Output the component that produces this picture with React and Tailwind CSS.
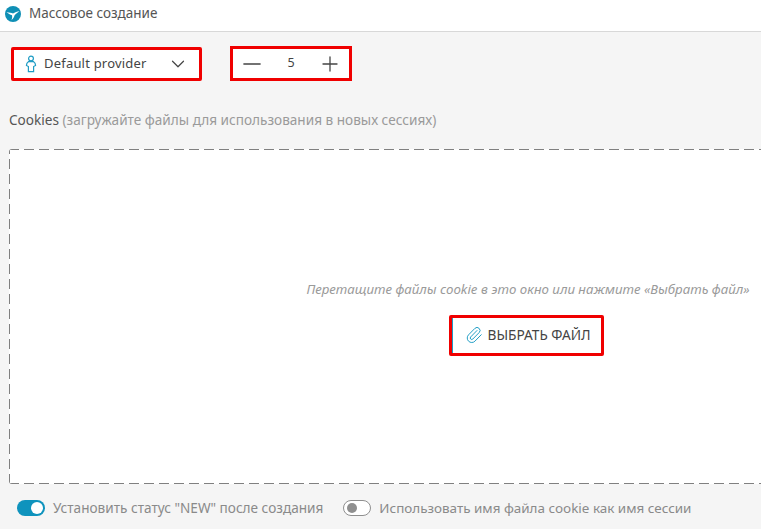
import React from 'react';
import { ChevronDown, Minus, Plus, Paperclip } from 'lucide-react';

const font = { fontFamily: '"Noto Sans", sans-serif' };

function Logo() {
  return (
    <svg width="16" height="16" viewBox="0 0 16 16">
      <circle cx="8" cy="8" r="8" fill="#0f8fb5" />
      <path d="M1.5 6C4.5 6.8 6.5 6.6 8 7.6C10 6.4 12 5.4 14.5 5.2C12.5 6.5 10.8 8 9.6 9.2C9.2 11 8.2 12.8 6.5 14C7.2 12.2 7.3 10.6 7 9.2C5.2 8.6 3 7.6 1.5 6Z" fill="#fff" />
    </svg>
  );
}

function PersonIcon() {
  return (
    <svg width="12" height="18" viewBox="0 0 12 18" fill="none" stroke="#1e9cc4" strokeWidth="1.2">
      <circle cx="6" cy="3.5" r="2.4" />
      <path d="M3.6 6.6H8.4C9.8 7.5 10.6 9 10.6 10.5L8.6 11.5V16.6H3.4V11.5L1.4 10.5C1.4 9 2.2 7.5 3.6 6.6Z" />
    </svg>
  );
}

function Toggle({ on }) {
  return on ? (
    <span className="flex items-center justify-end w-[28px] h-[16px] rounded-full bg-[#0f93bd] pr-[2px]">
      <span className="w-[12px] h-[12px] rounded-full bg-white" />
    </span>
  ) : (
    <span className="flex items-center w-[28px] h-[16px] rounded-full border border-[#8f8f8f] bg-white pl-[3px]">
      <span className="w-[10px] h-[10px] rounded-full bg-[#8f8f8f]" />
    </span>
  );
}

export default function App() {
  return (
    <div className="h-[529px] w-[761px] overflow-hidden bg-[#f5f5f5] text-[13px] flex flex-col" style={font}>
      {/* Header */}
      <div className="h-[32px] shrink-0 bg-white border-b border-[#d8d8d8] flex items-center pl-[5px] gap-[8px] pb-[4px]">
        <Logo />
        <span className="text-[#555] text-[13.5px]">Массовое создание</span>
      </div>

      <div className="flex items-end gap-[28px] pl-[11px] mt-[14px]">
        <div className="w-[191px] h-[34px] border-[3px] border-[#f00000] rounded-[2px] bg-white flex items-center pl-[11px] pr-[10px]">
          <PersonIcon />
          <span className="ml-[7px] text-[#444] text-[13px] tracking-[0.2px]">Default provider</span>
          <ChevronDown className="ml-auto text-[#444]" size={22} strokeWidth={1.3} />
        </div>
        <div className="w-[122px] h-[35px] border-[3px] border-[#f00000] bg-white flex items-center justify-between pl-[5px] pr-[7px]">
          <Minus className="text-[#444]" size={28} strokeWidth={1.1} />
          <span className="mr-[2px] text-[#444] text-[12.5px]">5</span>
          <Plus className="text-[#444]" size={24} strokeWidth={1.3} />
        </div>
      </div>

      <div className="ml-[9px] mt-[30px] text-[13.6px] leading-[18px] text-[#555]">
        Cookies <span className="text-[#9a9a9a]">(загружайте файлы для использования в новых сессиях)</span>
      </div>

      <div className="ml-[9px] mt-[20px] w-[1038px] h-[335px] shrink-0 bg-white rounded-[3px] bg-no-repeat [background-image:repeating-linear-gradient(90deg,#808080_0,#808080_10px,transparent_10px,transparent_15px),repeating-linear-gradient(90deg,#808080_0,#808080_10px,transparent_10px,transparent_15px),repeating-linear-gradient(0deg,#808080_0,#808080_10px,transparent_10px,transparent_15px)] [background-size:100%_1px,100%_1px,1px_100%] [background-position:0_0,0_100%,0_0] flex flex-col items-center justify-center pt-[3px]">
        <div className="text-[13.25px] italic text-[#9a9a9a]">Перетащите файлы cookie в это окно или нажмите «Выбрать файл»</div>
        <button className="mt-[15px] mr-[4px] w-[155px] h-[41px] border-[3px] border-[#f00000] rounded-[2px] bg-white text-[#444] text-[13.7px]">
          <span className="h-full flex items-center border-l border-[#1e9cc4] pl-[12px] gap-[5px]">
            <Paperclip className="text-[#1e9cc4]" size={18} strokeWidth={1.3} />
            ВЫБРАТЬ ФАЙЛ
          </span>
        </button>
      </div>

      <div className="flex items-center ml-[17px] mt-[14px] text-[13.6px] text-[#8a8a8a]">
        <Toggle on />
        <span className="ml-[8px]">Установить статус "NEW" после создания</span>
        <span className="ml-[20px]"><Toggle /></span>
        <span className="ml-[8px] text-[13.45px]">Использовать имя файла cookie как имя сессии</span>
      </div>
    </div>
  );
}
